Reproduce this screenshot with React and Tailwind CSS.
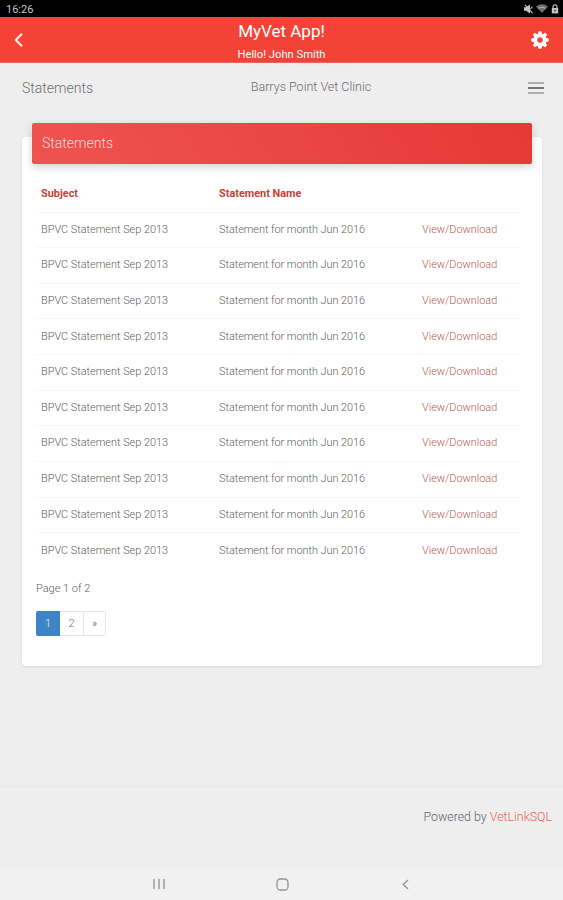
const statements = Array.from({ length: 10 }, (_, i) => ({
  id: i,
  subject: 'BPVC Statement Sep 2013',
  name: 'Statement for month Jun 2016',
}));

function StatusBar() {
  return (
    <div className="h-[17px] shrink-0 bg-black flex items-center justify-between pl-[6px] pr-[4px] text-[#c4c4c4]">
      <span className="text-[11px] leading-[17px] pt-px font-normal">16:26</span>
      <div className="flex items-center gap-[3px]">
        <svg className="w-[9px] h-[10px]" viewBox="0 0 9 10">
          <path d="M0 3.2h2L6 0.5v9L2 6.8H0z" fill="currentColor" />
          <path d="M1 0.8 8.6 9.2M8.4 2.6 6.4 5" stroke="currentColor" strokeWidth="1.1" />
        </svg>
        <svg className="w-[12px] h-[9px]" viewBox="0 0 12 9">
          <path d="M0 2.4Q6-1.8 12 2.4L6 9z" fill="#6f6f6f" />
          <path d="M2.2 4.4Q6 1.6 9.8 4.4" fill="none" stroke="#b5b5b5" />
        </svg>
        <svg className="w-[8px] h-[10px]" viewBox="0 0 8 10">
          <path d="M2 5V2.8a2 2 0 0 1 4 0V5" fill="none" stroke="currentColor" strokeWidth="1.2" />
          <path d="M0.8 4h6.4v5.4H0.8z" fill="currentColor" />
          <circle cx="4" cy="6.6" r="0.9" fill="#333" />
        </svg>
      </div>
    </div>
  );
}

function GearIcon() {
  return (
    <svg className="w-[18px] h-[18px]" viewBox="-9 -9 18 18" fill="none" stroke="#fff">
      <circle r="4.7" strokeWidth="3.8" />
      {[0, 45, 90, 135].map((deg) => (
        <g key={deg} transform={`rotate(${deg})`} fill="#fff" stroke="none">
          <path d="M-2-6-1.4-8.7h2.8L2-6z" />
          <path d="M-2 6-1.4 8.7h2.8L2 6z" />
        </g>
      ))}
    </svg>
  );
}

function AppHeader() {
  return (
    <header className="h-[46px] shrink-0 bg-[#f44336] border-b border-[#e2695f] text-white flex justify-between font-normal">
      <div className="w-[60px] pl-[13px] pt-[15px]">
        <svg className="w-[12px] h-[16px]" viewBox="0 0 12 16" fill="none" stroke="#ffe9e6" strokeWidth="2.1">
          <path d="M9 1.8 2.8 8 9 14.2" />
        </svg>
      </div>
      <div className="text-center pt-[3px]">
        <h1 className="text-[17px] leading-[22px]">MyVet App!</h1>
        <p className="text-[11.2px] leading-[15px] pt-[5px]">Hello! John Smith</p>
      </div>
      <div className="w-[60px] flex justify-end pr-[14px] pt-[14px]">
        <GearIcon />
      </div>
    </header>
  );
}

function StatementsTable() {
  return (
    <table className="w-[485px] ml-[14px] table-fixed border-collapse text-left text-[10.9px]">
      <thead>
        <tr className="h-[37px] text-[#cc3f38]">
          <th className="w-[178px] pl-[5px] pt-[2px] font-bold">Subject</th>
          <th className="w-[203px] pl-[5px] pt-[2px] font-bold">Statement Name</th>
          <th />
        </tr>
      </thead>
      <tbody>
        {statements.map((s) => (
          <tr key={s.id} className="h-[35.65px] border-t border-[#f7f7f7] text-[#606060]">
            <td className="pl-[5px]">{s.subject}</td>
            <td className="pl-[5px] tracking-[-0.04px]">{s.name}</td>
            <td className="pl-[5px] text-[#b55b57]">
              <a>View/Download</a>
            </td>
          </tr>
        ))}
      </tbody>
    </table>
  );
}

function Pagination() {
  return (
    <div className="ml-[14px] mt-[14px] flex h-[25px] w-[70px] text-[11px] text-center leading-[23px] text-[#777]">
      <span className="w-[24px] rounded-l-[2px] bg-[#3d85c6] text-[#e5f0fa] leading-[25px]">1</span>
      <span className="w-[24px] border border-l-0 border-[#e6e6e6]">2</span>
      <span className="w-[22px] rounded-r-[2px] border border-l-0 border-[#e6e6e6] text-[10px] font-normal">»</span>
    </div>
  );
}

export default function App() {
  return (
    <div className="h-[900px] w-[563px] overflow-hidden bg-[#eeeeee] flex flex-col font-[Roboto,sans-serif] font-light">
      <StatusBar />
      <AppHeader />

      {/* Page bar */}
      <div className="h-[49px] shrink-0 flex items-center justify-between pl-[22px] pr-[19px] text-[#6c6c6c]">
        <span className="w-[120px] text-[14px] pt-[2px]">Statements</span>
        <span className="text-[12.5px] ml-[5px]">Barrys Point Vet Clinic</span>
        <div className="w-[69px] flex justify-end">
          <div className="w-[16px] flex flex-col gap-[3px]">
            <i className="h-[2px] bg-[#b0b0b0]" />
            <i className="h-[2px] bg-[#747474]" />
            <i className="h-[2px] bg-[#b0b0b0]" />
          </div>
        </div>
      </div>

      {/* Statements card */}
      <main className="mx-[22px] mt-[25px] w-[520px] h-[529px] shrink-0 rounded-[4px] bg-white shadow-[0_1px_3px_rgba(0,0,0,0.1)]">
        <div className="-mt-[14px] mx-[10px] h-[41px] rounded-[2px] bg-linear-60 from-[#ef5350] to-[#e53935] pl-[10px] text-[14px] leading-[40px] text-[#ffdedb] shadow-[0_3px_8px_rgba(0,0,0,0.18)]">
          Statements
        </div>
        <div className="pt-[11px]">
          <StatementsTable />
          <p className="ml-[14px] mt-[13px] text-[11px] leading-[16px] text-[#606060]">Page 1 of 2</p>
          <Pagination />
        </div>
      </main>

      <footer className="mt-[120px] h-[82px] shrink-0 border-t border-[#e8e8e8] pr-[11px] pt-[22px] text-right text-[12.4px] leading-[16px] text-[#5f646a]">
        Powered by <a className="text-[#ea6058]">VetLinkSQL</a>
      </footer>

      {/* Android navigation */}
      <nav className="flex-1 bg-[#f1f1f1] flex items-center justify-between pl-[153px] pr-[154px] text-[#959595]">
        <svg className="w-[12px] h-[12px]" viewBox="0 0 12 12" fill="none" stroke="currentColor" strokeWidth="1.4">
          <path d="M1 1v10M6 1v10M11 1v10" />
        </svg>
        <svg className="w-[13px] h-[13px] -ml-[3px]" viewBox="0 0 13 13" fill="none" stroke="currentColor" strokeWidth="1.3">
          <rect x="1" y="1" width="11" height="11" rx="3.5" />
        </svg>
        <svg className="w-[7px] h-[11px]" viewBox="0 0 7 11" fill="none" stroke="currentColor" strokeWidth="1.4">
          <path d="M6 1 1.3 5.5 6 10" />
        </svg>
      </nav>
    </div>
  );
}
